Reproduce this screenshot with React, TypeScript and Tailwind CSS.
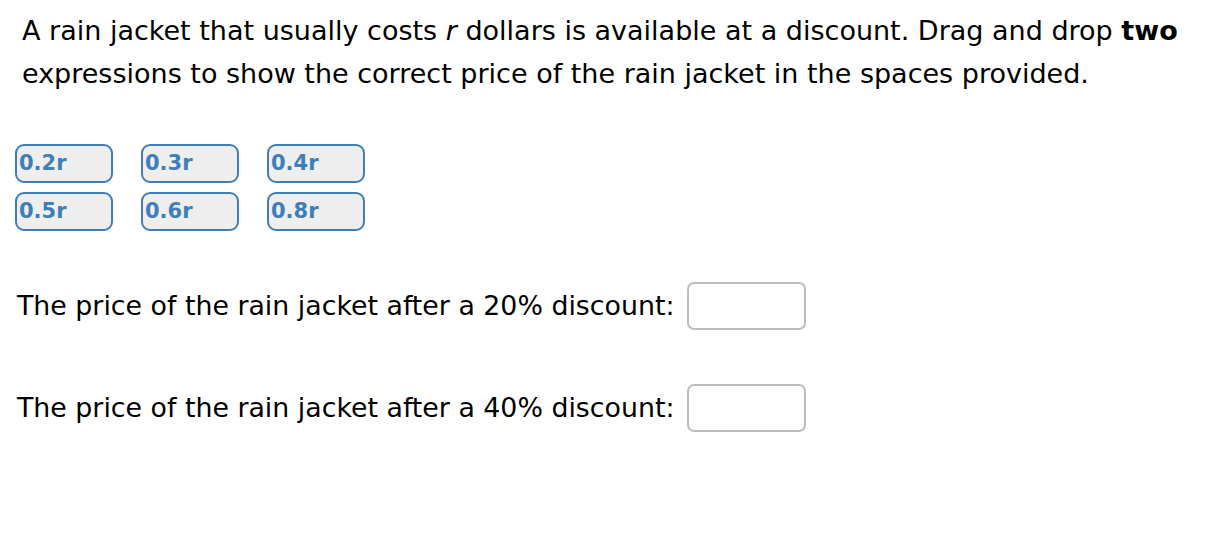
import React from "react";

const chips = [
  ["0.2r", "0.3r", "0.4r"],
  ["0.5r", "0.6r", "0.8r"],
];

function Chip({ label }: { label: string }) {
  return (
    <div className="w-[98px] h-[39px] rounded-[9px] border-2 border-[#3d7fb6] bg-[#eeeeee] flex items-center pl-[2px] text-[21px] font-bold text-[#3d7fb6] leading-none">
      {label}
    </div>
  );
}

function DropRow({ label }: { label: string }) {
  return (
    <div className="flex items-center">
      <span className="text-[26.8px] text-black whitespace-nowrap">{label}</span>
      <div className="ml-[13px] w-[119px] h-[48px] rounded-[7px] border-2 border-[#bdbdbd] bg-white" />
    </div>
  );
}

export default function App() {
  return (
    <div
      className="w-[1220px] h-[544px] bg-white text-black"
      style={{ fontFamily: '"DejaVu Sans", Verdana, sans-serif' }}
    >
      <p className="pl-[22px] pt-[9px] text-[27px] leading-[43px]">
        A rain jacket that usually costs <i>r</i> dollars is available at a discount. Drag and drop{" "}
        <b>two</b> expressions to show the correct price of the rain jacket in the spaces provided.
      </p>
      <div className="pl-[15px] pt-[49px] flex flex-col gap-[9px]">
        {chips.map((row, i) => (
          <div key={i} className="flex gap-[28px]">
            {row.map((c) => (
              <Chip key={c} label={c} />
            ))}
          </div>
        ))}
      </div>
      <div className="pl-[17px] pt-[51px] flex flex-col gap-[54px]">
        <DropRow label="The price of the rain jacket after a 20% discount:" />
        <DropRow label="The price of the rain jacket after a 40% discount:" />
      </div>
    </div>
  );
}
